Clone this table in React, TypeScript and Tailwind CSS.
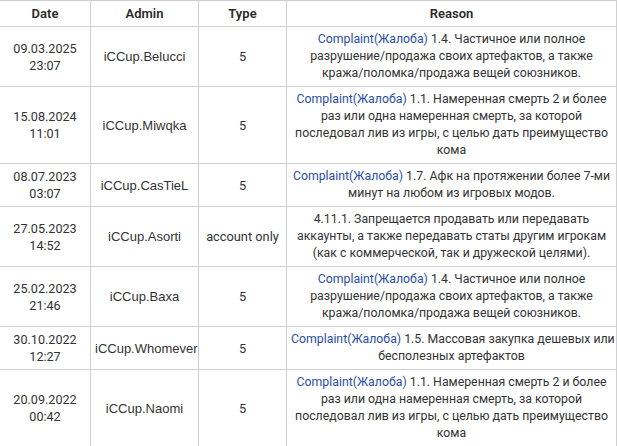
import React from "react";

type Row = {
  date: string;
  time: string;
  admin: string;
  type: string;
  link?: string;
  lines: string[];
};

const rows: Row[] = [
  {
    date: "09.03.2025",
    time: "23:07",
    admin: "iCCup.Belucci",
    type: "5",
    link: "Complaint(Жалоба)",
    lines: [" 1.4. Частичное или полное", "разрушение/продажа своих артефактов, а также", "кража/поломка/продажа вещей союзников."],
  },
  {
    date: "15.08.2024",
    time: "11:01",
    admin: "iCCup.Miwqka",
    type: "5",
    link: "Complaint(Жалоба)",
    lines: [" 1.1. Намеренная смерть 2 и более", "раз или одна намеренная смерть, за которой", "последовал лив из игры, с целью дать преимущество", "кома"],
  },
  {
    date: "08.07.2023",
    time: "03:07",
    admin: "iCCup.CasTieL",
    type: "5",
    link: "Complaint(Жалоба)",
    lines: [" 1.7. Афк на протяжении более 7-ми", "минут на любом из игровых модов."],
  },
  {
    date: "27.05.2023",
    time: "14:52",
    admin: "iCCup.Asorti",
    type: "account only",
    lines: ["4.11.1. Запрещается продавать или передавать", "аккаунты, а также передавать статы другим игрокам", "(как с коммерческой, так и дружеской целями)."],
  },
  {
    date: "25.02.2023",
    time: "21:46",
    admin: "iCCup.Baxa",
    type: "5",
    link: "Complaint(Жалоба)",
    lines: [" 1.4. Частичное или полное", "разрушение/продажа своих артефактов, а также", "кража/поломка/продажа вещей союзников."],
  },
  {
    date: "30.10.2022",
    time: "12:27",
    admin: "iCCup.Whomever",
    type: "5",
    link: "Complaint(Жалоба)",
    lines: [" 1.5. Массовая закупка дешевых или", "бесполезных артефактов"],
  },
  {
    date: "20.09.2022",
    time: "00:42",
    admin: "iCCup.Naomi",
    type: "5",
    link: "Complaint(Жалоба)",
    lines: [" 1.1. Намеренная смерть 2 и более", "раз или одна намеренная смерть, за которой", "последовал лив из игры, с целью дать преимущество", "кома"],
  },
];

const cell = "border border-[#cfcfcf] px-1 py-1 text-center align-middle";

export default function App() {
  return (
    <div className="w-[617px] h-[446px] overflow-hidden bg-white">
      <table
        className="-ml-px w-[618px] border-collapse text-[12.3px] leading-[17px] text-[#333]"
        style={{ fontFamily: "Roboto, 'Noto Sans', sans-serif", tableLayout: "fixed" }}
      >
        <colgroup>
          <col className="w-[91px]" />
          <col className="w-[108px]" />
          <col className="w-[88px]" />
          <col />
        </colgroup>
        <thead>
          <tr>
            <th className={`${cell} text-[13px] font-semibold text-[#2a2a2a]`}>Date</th>
            <th className={`${cell} text-[13px] font-semibold text-[#2a2a2a]`}>Admin</th>
            <th className={`${cell} text-[13px] font-semibold text-[#2a2a2a]`}>Type</th>
            <th className={`${cell} text-[13px] font-semibold text-[#2a2a2a]`}>Reason</th>
          </tr>
        </thead>
        <tbody>
          {rows.map((r, i) => (
            <tr key={i}>
              <td className={`${cell} text-[12.6px]`}>
                {r.date}
                <br />
                {r.time}
              </td>
              <td className={`${cell} whitespace-nowrap text-[13px]`} style={{ fontFamily: "'Liberation Sans', Arial, sans-serif" }}>
                {r.admin}
              </td>
              <td className={`${cell} whitespace-nowrap text-[12.8px]`}>{r.type}</td>
              <td className={`${cell} whitespace-nowrap`}>
                {r.lines.map((l, j) => (
                  <React.Fragment key={j}>
                    {j === 0 && r.link ? <span className="text-[#2b4ea6]">{r.link}</span> : null}
                    {l}
                    {j < r.lines.length - 1 ? <br /> : null}
                  </React.Fragment>
                ))}
              </td>
            </tr>
          ))}
        </tbody>
      </table>
    </div>
  );
}
